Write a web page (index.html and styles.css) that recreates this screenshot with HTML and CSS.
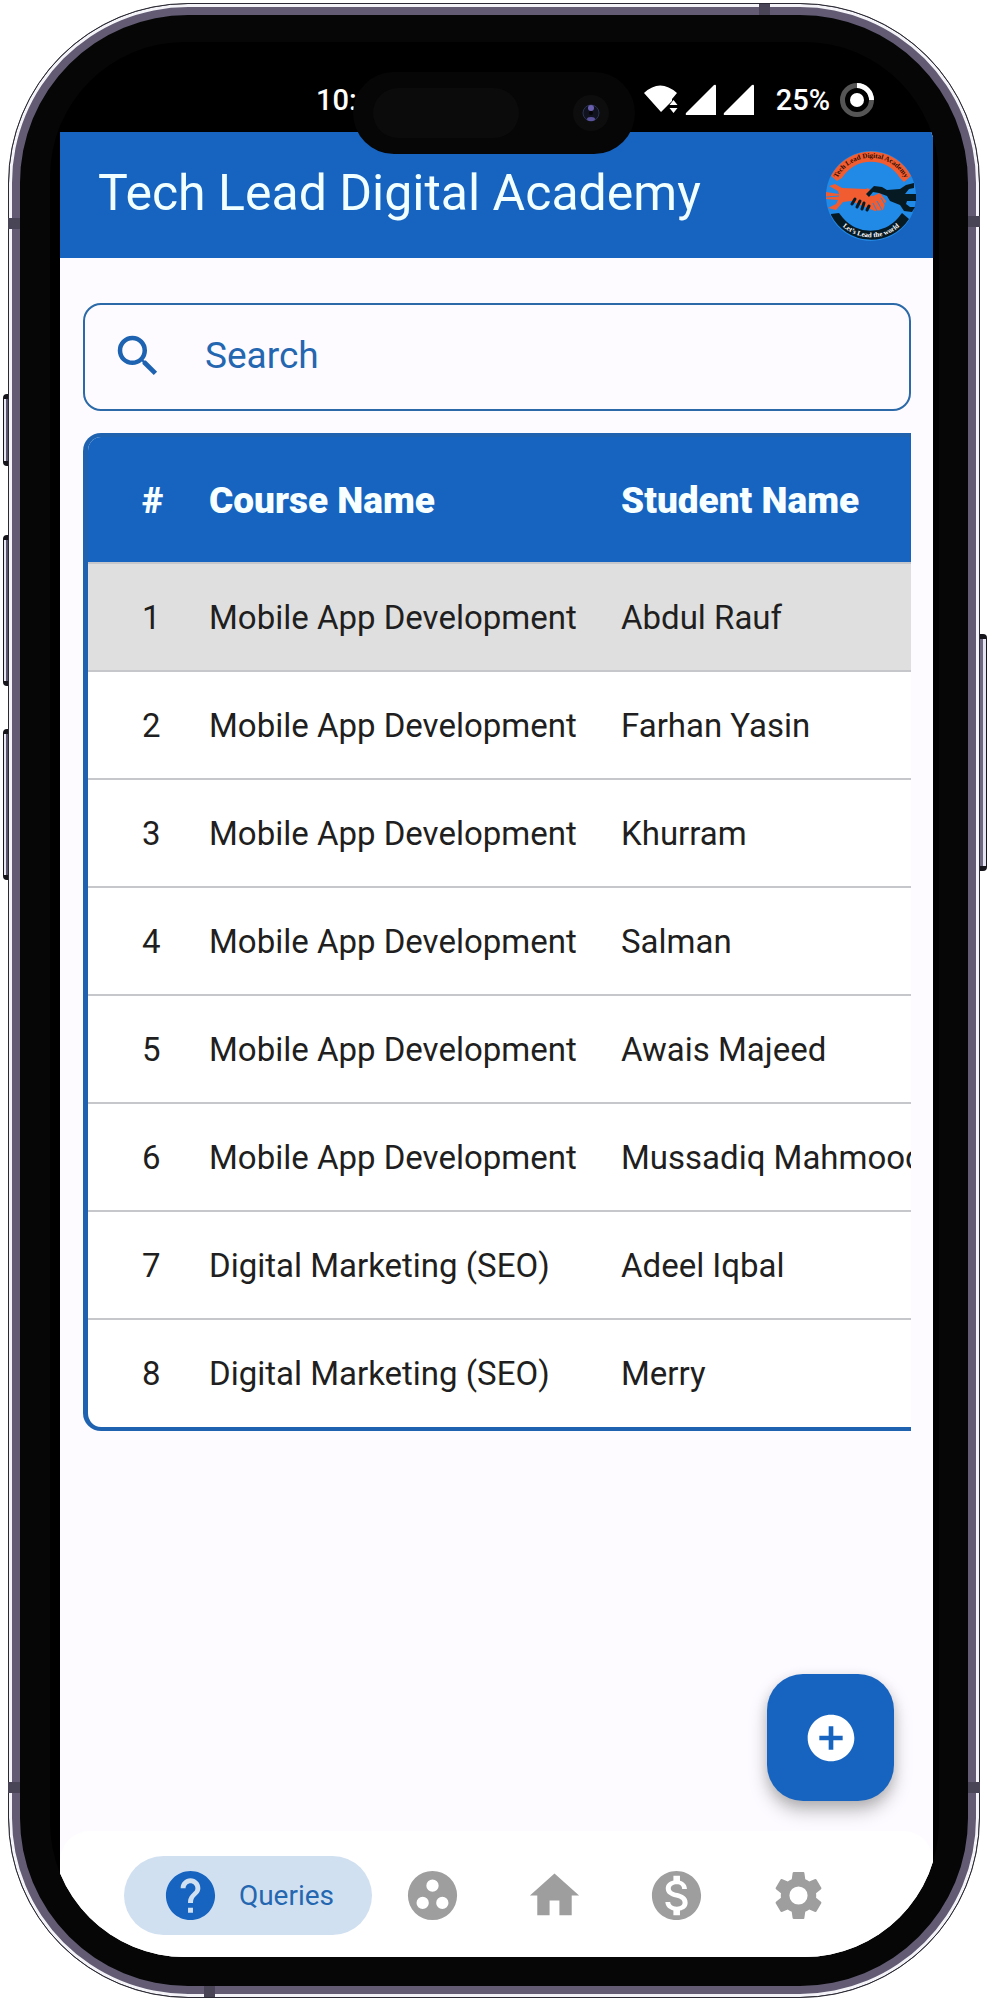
FILE: index.html
```html
<!DOCTYPE html>
<html lang="en">
<head>
<meta charset="utf-8">
<meta name="viewport" content="width=device-width, initial-scale=1">
<title>Tech Lead Digital Academy</title>
<link rel="stylesheet" href="styles.css">
</head>
<body>
<div class="device">
  <span class="side-key key-action"></span>
  <span class="side-key key-up"></span>
  <span class="side-key key-down"></span>
  <span class="side-key key-power"></span>
  <div class="shell">
    <span class="band band-top"></span>
    <span class="band band-bottom"></span>
    <span class="band band-side band-left-high"></span>
    <span class="band band-side band-left-low"></span>
    <span class="band band-side band-right-high"></span>
    <span class="band band-side band-right-low"></span>
    <div class="screen">
      <div class="status">
        <span class="clock">10:</span>
        <div class="status-icons">
          <svg class="wifi" width="36" height="32" viewBox="0 0 36 32" aria-hidden="true">
            <path d="M1 9Q17 -6 34 9L29 15V17L25 21L18 28Z" fill="#fff"/>
            <path d="M30.500 16l4 5h-8zM30.500 29l4-5h-8z" fill="#fff"/>
          </svg>
          <svg class="signal" width="32" height="32" viewBox="0 0 32 32" aria-hidden="true"><path d="M29 1Q31 0 31 2V31H2Q0 31 1 29Z" fill="#fff"/></svg>
          <svg class="signal" width="32" height="32" viewBox="0 0 32 32" aria-hidden="true"><path d="M29 1Q31 0 31 2V31H2Q0 31 1 29Z" fill="#fff"/></svg>
          <span class="percent">25%</span>
          <svg width="34" height="34" viewBox="0 0 34 34" aria-hidden="true">
            <circle cx="17" cy="17" r="14.500" fill="none" stroke="#555" stroke-width="5"/>
            <path d="M17 2.500A14.500 14.500 0 0 1 31.500 17" fill="none" stroke="#fff" stroke-width="5"/>
            <circle cx="17" cy="17" r="7" fill="#fff"/>
          </svg>
        </div>
      </div>
      <div class="app">
        <header class="appbar">
          <h1 class="title">Tech Lead Digital Academy</h1>
          <svg class="logo" width="92" height="92" viewBox="0 0 92 92" role="img" aria-label="Academy logo">
            <defs>
              <path id="arc-top" d="M11 31A38 38 0 0 1 81 31"/>
              <path id="arc-bottom" d="M14 73A43 43 0 0 0 78 73"/>
            </defs>
            <circle cx="46" cy="46" r="45" fill="#2189e6"/>
            <path d="M6 26A45 45 0 0 1 86 26L79 32L75 28A34 34 0 0 0 17 28L12 31Z" fill="#f15c30"/>
            <path d="M6 64L14 63L18 68A36 36 0 0 0 73 68L77 63L84 69A45 45 0 0 1 6 65Z" fill="#061a24"/>
            <path d="M4 36L10 34L17 38L41 39L43 38L46 41L42 45L48 46L55 43L61 51L58 60L50 61L40 57L26 51L18 52L11 60L3 58L11 54L13 50L1 49L1 42L14 44L13 41Z" fill="#f15c30"/>
            <path d="M41 44L49 36L57 37L62 40L75 39L81 35L89 33V38L84 39L80 44H91V51H82L81 54L85 57L90 57L87 62L79 61L75 55L65 51L62 46L54 43L48 42L44 47Z" fill="#061a24"/>
            <path d="M30 49l-3 5M35 51l-3 6M39 53l-2 6M44 56l-2 4" stroke="#061a24" stroke-width="3" stroke-linecap="round"/>
            <path d="M48 53l4 8M52 51l5 9M56 48l5 8" stroke="#2189e6" stroke-width="1"/>
            <path d="M12 52L5 55M14 46L1 47" stroke="#2189e6" stroke-width="1"/>
            <text class="logo-top"><textPath href="#arc-top" startOffset="50%">Tech Lead Digital Academy</textPath></text>
            <text class="logo-bottom"><textPath href="#arc-bottom" startOffset="50%">Let’s Lead the world</textPath></text>
          </svg>
        </header>
        <main class="content">
          <label class="search" for="search">
            <svg width="54" height="54" viewBox="0 0 24 24" aria-hidden="true"><path fill="#1d63b1" d="M15.500 14h-.79l-.28-.27A6.471 6.471 0 0 0 16 9.500 6.500 6.500 0 1 0 9.500 16c1.610 0 3.090-.59 4.230-1.570l.27.28v.79l5 4.990L20.490 19l-4.990-5zm-6 0C7.010 14 5 11.990 5 9.500S7.010 5 9.500 5 14 7.010 14 9.500 11.990 14 9.500 14z"/></svg>
            <input class="search-input" id="search" type="text" placeholder="Search" aria-label="Search">
          </label>
          <div class="table-box">
            <table class="queries">
              <colgroup><col class="col-num"><col class="col-course"><col></colgroup>
              <thead>
                <tr><th scope="col">#</th><th scope="col">Course Name</th><th scope="col">Student Name</th></tr>
              </thead>
              <tbody>
                <tr class="selected"><td>1</td><td>Mobile App Development</td><td>Abdul Rauf</td></tr>
                <tr><td>2</td><td>Mobile App Development</td><td>Farhan Yasin</td></tr>
                <tr><td>3</td><td>Mobile App Development</td><td>Khurram</td></tr>
                <tr><td>4</td><td>Mobile App Development</td><td>Salman</td></tr>
                <tr><td>5</td><td>Mobile App Development</td><td>Awais Majeed</td></tr>
                <tr><td>6</td><td>Mobile App Development</td><td>Mussadiq Mahmood</td></tr>
                <tr><td>7</td><td>Digital Marketing (SEO)</td><td>Adeel Iqbal</td></tr>
                <tr><td>8</td><td>Digital Marketing (SEO)</td><td>Merry</td></tr>
              </tbody>
            </table>
          </div>
          <button class="fab" type="button" aria-label="Add query">
            <svg width="56" height="56" viewBox="0 0 24 24" aria-hidden="true"><path fill="#fff" d="M12 2C6.480 2 2 6.480 2 12s4.480 10 10 10 10-4.480 10-10S17.520 2 12 2zm5 11h-4v4h-2v-4H7v-2h4V7h2v4h4v2z"/></svg>
          </button>
        </main>
        <nav class="tabs" aria-label="Main">
          <button class="tab active" type="button">
            <svg width="59" height="59" viewBox="0 0 24 24" aria-hidden="true"><path fill="#1764c0" d="M12 2C6.480 2 2 6.480 2 12s4.480 10 10 10 10-4.480 10-10S17.520 2 12 2zm1 17h-2v-2h2v2zm2.070-7.750l-.9.920C13.450 12.900 13 13.500 13 15h-2v-.5c0-1.100.450-2.100 1.170-2.830l1.240-1.260c.370-.36.590-.86.590-1.410 0-1.100-.9-2-2-2s-2 .9-2 2H8c0-2.210 1.790-4 4-4s4 1.790 4 4c0 .88-.36 1.680-.93 2.250z"/></svg>
            <span>Queries</span>
          </button>
          <button class="tab" type="button" aria-label="Groups">
            <svg width="59" height="59" viewBox="0 0 24 24" aria-hidden="true"><path fill="#9e9e9e" fill-rule="evenodd" d="M12 2a10 10 0 1 0 0 20 10 10 0 0 0 0-20zM8 17.500a2.500 2.500 0 1 1 0-5 2.500 2.500 0 0 1 0 5zM9.500 8a2.500 2.500 0 1 1 5 0 2.500 2.500 0 0 1-5 0zM16 17.500a2.500 2.500 0 1 1 0-5 2.500 2.500 0 0 1 0 5z"/></svg>
          </button>
          <button class="tab" type="button" aria-label="Home">
            <svg width="59" height="59" viewBox="0 0 24 24" aria-hidden="true"><path fill="#9e9e9e" d="M10 20v-6h4v6h5v-8h3L12 3 2 12h3v8z"/></svg>
          </button>
          <button class="tab" type="button" aria-label="Payments">
            <svg width="59" height="59" viewBox="0 0 24 24" aria-hidden="true"><path fill="#9e9e9e" d="M12 2C6.480 2 2 6.480 2 12s4.480 10 10 10 10-4.480 10-10S17.520 2 12 2zm1.410 16.090V20h-2.670v-1.930c-1.710-.36-3.160-1.460-3.270-3.400h1.960c.1 1.050.820 1.870 2.650 1.870 1.960 0 2.400-.98 2.400-1.590 0-.83-.44-1.610-2.670-2.140-2.480-.6-4.180-1.620-4.180-3.670 0-1.720 1.390-2.840 3.110-3.210V4h2.670v1.950c1.860.45 2.790 1.860 2.850 3.390H14.300c-.05-1.110-.64-1.870-2.220-1.870-1.500 0-2.400.680-2.400 1.640 0 .840.650 1.390 2.670 1.910s4.180 1.390 4.180 3.910c-.01 1.830-1.380 2.830-3.120 3.160z"/></svg>
          </button>
          <button class="tab" type="button" aria-label="Settings">
            <svg width="59" height="59" viewBox="0 0 24 24" aria-hidden="true"><path fill="#9e9e9e" d="M19.140 12.940c.04-.3.060-.61.060-.94 0-.32-.02-.64-.07-.94l2.030-1.580c.18-.14.230-.41.120-.61l-1.920-3.320c-.12-.22-.37-.29-.59-.22l-2.390.96c-.5-.38-1.030-.7-1.620-.94l-.36-2.540c-.04-.24-.24-.41-.48-.41h-3.840c-.24 0-.43.170-.47.410l-.36 2.540c-.59.240-1.130.570-1.620.940l-2.390-.96c-.22-.08-.47 0-.59.220L2.740 8.870c-.12.210-.08.470.12.610l2.030 1.580c-.05.3-.09.630-.09.940s.02.640.07.940l-2.030 1.580c-.18.140-.23.410-.12.610l1.920 3.320c.12.220.37.290.59.220l2.390-.96c.5.380 1.030.7 1.620.94l.36 2.540c.05.240.24.410.48.410h3.840c.24 0 .44-.17.470-.41l.36-2.540c.59-.24 1.130-.56 1.620-.94l2.390.96c.22.080.47 0 .59-.22l1.920-3.320c.12-.22.070-.47-.12-.61l-2.010-1.580zM12 15.700a3.700 3.700 0 1 1 0-7.400 3.700 3.700 0 0 1 0 7.400z"/></svg>
          </button>
        </nav>
      </div>
    </div>
    <div class="island">
      <span class="island-sensor"></span>
      <svg class="camera" width="36" height="36" viewBox="0 0 36 36" aria-hidden="true">
        <circle cx="18" cy="18" r="18" fill="#0d0d0e"/>
        <circle cx="18" cy="18" r="8" fill="#10131f" stroke="#29324f" stroke-width="1"/>
        <ellipse cx="18" cy="13" rx="3" ry="3" fill="#6a5fae"/>
        <ellipse cx="18" cy="24" rx="4" ry="2" fill="#5b529c"/>
        <circle cx="18" cy="18" r="2" fill="#050508"/>
      </svg>
    </div>
  </div>
</div>
</body>
</html>
```
FILE: styles.css
```css
* {
  box-sizing: border-box;
}

body {
  margin: 0;
  background: #fff;
  color: #1f1f21;
  font-family: Roboto, "Liberation Sans", sans-serif;
}

button {
  border: 0;
  padding: 0;
  background: none;
  font: inherit;
}

svg {
  display: block;
  flex: none;
}

/* Handset */
.device {
  position: relative;
  display: flex;
  min-height: 100vh;
  padding: 3px 8px 2px;
}

.shell {
  position: relative;
  display: flex;
  flex: 1;
  min-width: 0;
  padding: 38px 40px 40px 41px;
  border: 1px solid #2b2933;
  border-radius: 180px;
  background: #060606;
  box-shadow: inset 0 0 0 3px #f4f3f8, inset 0 0 0 11px #625b73;
}

.side-key {
  position: absolute;
  left: 3px;
  width: 6px;
  border: 1px solid #16151b;
  border-top-width: 5px;
  border-bottom-width: 5px;
  border-radius: 4px 0 0 4px;
  background: linear-gradient(90deg, #e6e6f2 50%, #5a546a 50%);
}

.key-action {
  top: 394px;
  height: 72px;
}

.key-up {
  top: 535px;
  height: 151px;
}

.key-down {
  top: 729px;
  height: 151px;
}

.key-power {
  top: 634px;
  right: 1px;
  left: auto;
  width: 8px;
  height: 237px;
  border-radius: 0 4px 4px 0;
  background: linear-gradient(90deg, #6f6883 50%, #e6e6f2 50%);
}

.band {
  position: absolute;
  width: 11px;
  height: 11px;
  background: #494556;
}

.band-side {
  width: 12px;
}

.band-top {
  top: 0;
  right: 209px;
}

.band-bottom {
  bottom: 0;
  left: 195px;
}

.band-left-high {
  top: 214px;
  left: -1px;
}

.band-left-low {
  bottom: 204px;
  left: -1px;
}

.band-right-high {
  top: 212px;
  right: -1px;
}

.band-right-low {
  bottom: 204px;
  right: -1px;
}

.island {
  position: absolute;
  top: 68px;
  left: 50%;
  display: flex;
  align-items: center;
  justify-content: space-between;
  width: 282px;
  height: 82px;
  padding: 0 26px 0 20px;
  border-radius: 41px;
  background: #060606;
  transform: translateX(-50%);
}

.island-sensor {
  width: 146px;
  height: 50px;
  border-radius: 25px;
  background: #0b0b0b;
}

/* Screen */
.screen {
  display: flex;
  flex: 1;
  flex-direction: column;
  min-width: 0;
  padding: 0 6px 0 10px;
  overflow: hidden;
  border-radius: 135px;
  background: #000;
}

.status {
  display: flex;
  align-items: center;
  justify-content: space-between;
  height: 90px;
  padding: 26px 59px 0 256px;
  color: #fff;
  font-size: 29px;
  font-weight: 500;
}

.status-icons {
  display: flex;
  align-items: center;
  gap: 6px;
}

.percent {
  padding: 0 4px 0 15px;
}

.app {
  display: flex;
  flex: 1;
  flex-direction: column;
  background: #fdfbff;
}

.appbar {
  display: flex;
  align-items: center;
  justify-content: space-between;
  height: 126px;
  padding: 0 16px 4px 38px;
  background: #1764c0;
}

.title {
  margin: 0;
  color: #f2ffff;
  font-size: 50px;
  font-weight: 400;
  white-space: nowrap;
}

.logo {
  margin-top: 6px;
}

.logo-top,
.logo-bottom {
  font-family: "Liberation Serif", serif;
  font-size: 7px;
  font-weight: 700;
  text-anchor: middle;
}

.logo-top {
  fill: #2a0d05;
}

.logo-bottom {
  fill: #fff;
}

.content {
  position: relative;
  flex: 1;
  padding: 45px 22px 0 23px;
}

.search {
  display: flex;
  align-items: center;
  gap: 40px;
  height: 108px;
  margin-bottom: 22px;
  padding: 0 26px 2px;
  border: 2px solid #2b69a8;
  border-radius: 18px;
}

.search-input {
  flex: 1;
  min-width: 0;
  padding: 0;
  border: 0;
  outline: 0;
  background: none;
  color: #2467b0;
  font: 400 37px/48px Roboto, "Liberation Sans", sans-serif;
}

.search-input::placeholder {
  color: #2467b0;
  opacity: 1;
}

.table-box {
  overflow: hidden;
  border: solid #1f63b0;
  border-width: 4px 0 4px 5px;
  border-radius: 18px 0 0 18px;
  background: #fff;
}

.queries {
  width: 100%;
  border-collapse: collapse;
  table-layout: fixed;
  white-space: nowrap;
}

.col-num {
  width: 121px;
}

.col-course {
  width: 412px;
}

.queries th {
  height: 126px;
  padding: 2px 0 0;
  background: #1764c0;
  color: #f7ffff;
  font-size: 37px;
  font-weight: 900;
  text-align: left;
}

.queries td {
  height: 108px;
  padding: 0;
  border-top: 2px solid #c6c7ca;
  font-size: 33px;
}

.queries th:first-child,
.queries td:first-child {
  padding-left: 54px;
}

.queries .selected td {
  background: #dfdfdf;
}

.fab {
  position: absolute;
  right: 39px;
  bottom: 30px;
  display: grid;
  place-items: center;
  width: 127px;
  height: 127px;
  border-radius: 36px;
  background: #1764c0;
  box-shadow: 0 10px 18px rgba(0, 0, 0, 0.25), 0 3px 12px rgba(0, 0, 0, 0.1);
}

.tabs {
  display: flex;
  align-items: center;
  justify-content: center;
  height: 126px;
  padding: 2px 10px 0 0;
  border-radius: 30px 30px 0 0;
  background: #fff;
}

.tab {
  display: flex;
  align-items: center;
  justify-content: center;
  width: 122px;
  height: 79px;
}

.tab.active {
  gap: 19px;
  width: 248px;
  border-radius: 40px;
  background: #d1e0f1;
  color: #2467b0;
  font-size: 28px;
}
```
